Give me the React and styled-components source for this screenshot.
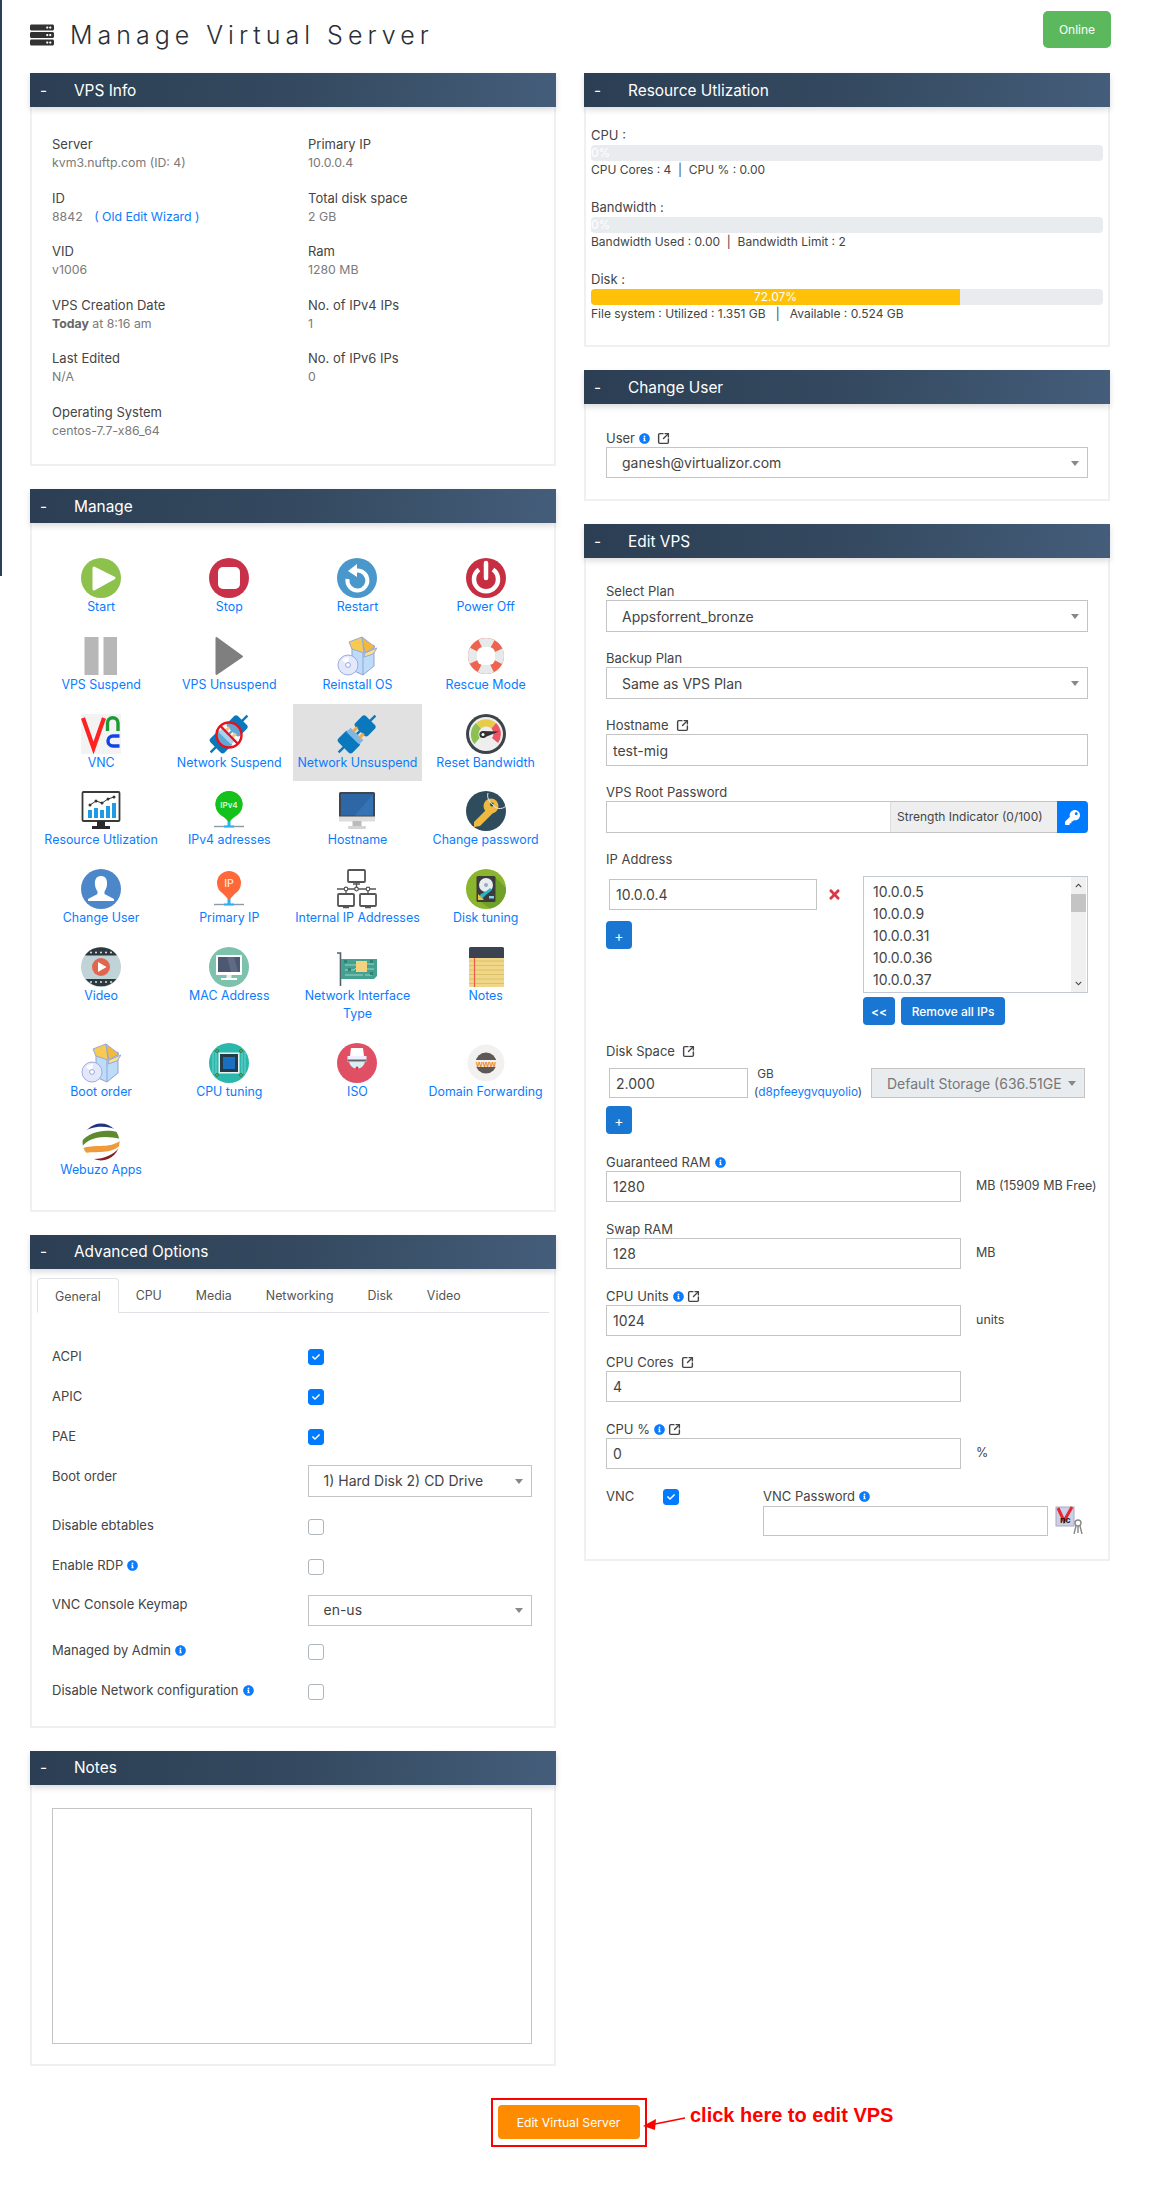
import React from 'react';
import styled, { createGlobalStyle } from 'styled-components';
import { FaServer, FaInfoCircle, FaKey, FaTimes, FaCheck, FaChevronUp, FaChevronDown } from 'react-icons/fa';
import { SquareArrowOutUpRight } from 'lucide-react';

const GlobalStyle = createGlobalStyle`
  * { box-sizing: border-box; }
  html, body { margin: 0; padding: 0; background: #fff; }
  body {
    font-family: Inter, "Open Sans", sans-serif;
    font-size: 13px;
    color: #444;
  }
`;

const Page = styled.div`
  position: relative;
  width: 1151px;
  height: 2199px;
  padding: 0 40px 0 30px;
  overflow: hidden;

  &::before {
    content: '';
    position: absolute;
    left: 0;
    top: 0;
    width: 2px;
    height: 576px;
    background: #2c3e5a;
  }
`;

const TopBar = styled.div`
  display: flex;
  align-items: flex-start;
  justify-content: space-between;
  height: 73px;
  padding-top: 11px;
`;

const Title = styled.h1`
  display: flex;
  align-items: center;
  gap: 16px;
  margin: 6px 0 0;
  font-size: 25px;
  font-weight: 300;
  letter-spacing: 5px;
  line-height: 36px;
  color: #2a2f36;
`;

const Online = styled.div`
  width: 68px;
  height: 37px;
  display: flex;
  align-items: center;
  justify-content: center;
  border-radius: 5px;
  background: #5cb85c;
  color: #fff;
  font-size: 12px;
`;

const Columns = styled.div`
  display: grid;
  grid-template-columns: 525.5px 526px;
  column-gap: 28.5px;
  align-items: start;
`;

const Panel = styled.section`
  margin-bottom: ${p => p.$gap ?? 23}px;
`;

const PanelHead = styled.div`
  display: flex;
  align-items: center;
  height: ${p => p.$h || 34}px;
  background: linear-gradient(95deg, #2b3e54 0%, #34495f 50%, #445d7a 100%);
  box-shadow: 0 3px 6px rgba(0, 0, 0, 0.14);
  color: #fff;
  font-size: 15.4px;
  font-weight: 400;
  position: relative;

  span:first-child {
    width: 44px;
    padding-left: 10px;
  }
`;

const PanelBody = styled.div`
  border: 2px solid #f0f0f0;
  border-top: 0;
  padding: ${p => p.$pad};
`;

const InfoGrid = styled.div`
  display: grid;
  grid-template-columns: 256px 1fr;
  grid-auto-rows: 53.5px;
`;

const InfoLabel = styled.div`
  line-height: 19px;
  color: #444;
  font-size: 13px;
`;

const InfoValue = styled.div`
  line-height: 18px;
  color: #7a7a7a;
  font-size: 12.3px;

  a { color: #0a7bff; text-decoration: none; margin-left: 8px; }
  b { font-weight: 700; color: #666; }
`;

const ManageGrid = styled.div`
  display: grid;
  grid-template-columns: repeat(4, 128.2px);
`;

const ManageCell = styled.a`
  display: block;
  padding: 10px 0 9.5px;
  text-align: center;
  color: #0a7bff;
  font-size: 12.4px;
  line-height: 18.3px;
  white-space: pre-line;
  background: ${p => (p.$active ? '#e1e1e1' : 'transparent')};

  svg { display: block; margin: 0 auto; }
`;

const TabBar = styled.div`
  display: flex;
  height: 35px;
  border-bottom: 1px solid #dee2e6;
  font-size: 12.4px;
  color: #555;
`;

const Tab = styled.div`
  padding: 0 17px;
  line-height: 35px;
  height: 35px;
  ${p => p.$active && `
    background: #fff;
    border: 1px solid #dee2e6;
    border-bottom-color: #fff;
    border-radius: 4px 4px 0 0;
  `}
`;

const OptionList = styled.div`
  margin: 33px 0 0 15px;
`;

const OptionRow = styled.div`
  display: grid;
  grid-template-columns: 255.5px 224px;
  height: ${p => p.$h || 40}px;
  line-height: 20px;
`;

const Control = styled.div`
  margin-top: ${p => p.$top || 0}px;
`;

const Check = styled.span`
  display: flex;
  align-items: center;
  justify-content: center;
  width: 16px;
  height: 16px;
  border-radius: 3px;
  background: ${p => (p.$on ? '#007bff' : '#fff')};
  border: 1px solid ${p => (p.$on ? '#007bff' : '#adb5bd')};
  color: #fff;
`;

const Info = styled(FaInfoCircle)`
  color: #0a7bff;
  font-size: 11px;
  vertical-align: -1px;
  margin-left: ${p => p.$ml ?? 4}px;
`;

const Ext = styled(SquareArrowOutUpRight).attrs({ size: 13, strokeWidth: 2.6 })`
  color: #444;
  vertical-align: -2px;
  margin-left: ${p => p.$ml ?? 7}px;
`;

const SelectBox = styled.div`
  position: relative;
  display: flex;
  align-items: center;
  height: ${p => p.$h || 32}px;
  width: ${p => (p.$w ? `${p.$w}px` : '100%')};
  padding: 0 30px 0 15px;
  border: 1px solid #c4c4c4;
  background: ${p => (p.$disabled ? '#e9ecef' : '#fff')};
  color: ${p => (p.$disabled ? '#777' : '#444')};
  font-size: 14px;
  white-space: nowrap;
  overflow: hidden;

  &::after {
    content: '';
    position: absolute;
    right: 8px;
    top: 50%;
    margin-top: -2px;
    border-left: 4px solid transparent;
    border-right: 4px solid transparent;
    border-top: 5px solid #888;
  }
`;

const TextBox = styled.input`
  display: block;
  height: ${p => p.$h || 31}px;
  width: ${p => (p.$w ? `${p.$w}px` : '100%')};
  margin: 0;
  padding: 0 6px;
  border: 1px solid #c4c4c4;
  border-radius: 0;
  outline: 0;
  background: #fff;
  color: #444;
  font: 14px Inter, sans-serif;
`;

const BarBlock = styled.div`
  margin-bottom: 19px;
  line-height: 18px;
  font-size: 12px;
`;

const BarTitle = styled.div`
  font-size: 13px;
  margin-bottom: 1px;
`;

const Track = styled.div`
  height: 16px;
  border-radius: 4px;
  background: #e9ecef;
  overflow: hidden;
`;

const Fill = styled.div`
  height: 100%;
  background: ${p => (p.$on ? '#ffc107' : 'transparent')};
  color: #fff;
  font-size: 12px;
  line-height: 16px;
  text-align: ${p => (p.$on ? 'center' : 'left')};
  white-space: nowrap;
`;

const FieldWrap = styled.div`
  margin-bottom: ${p => p.$mb ?? 17}px;
`;

const FieldLabel = styled.div`
  height: 18px;
  line-height: 18px;
  font-size: 13px;
  white-space: nowrap;
`;

const InputGroup = styled.div`
  display: flex;
  height: 32px;
  border: 1px solid #c4c4c4;
  border-right: 0;
  border-radius: 0 4px 4px 0;
`;

const Addon = styled.div`
  width: 167px;
  background: #eee;
  border-left: 1px solid #ddd;
  font-size: 12px;
  line-height: 30px;
  padding-left: 6px;
  white-space: nowrap;
`;

const KeyButton = styled.button`
  width: 31px;
  margin: -1px 0;
  border: 0;
  padding: 0;
  border-radius: 0 4px 4px 0;
  background: #007bff;
  color: #fff;
  font-size: 15px;
  display: flex;
  align-items: center;
  justify-content: center;
`;

const BareInput = styled.div`
  flex: 1;
`;

const IpRow = styled.div`
  display: grid;
  grid-template-columns: 257px 225px;
  margin-top: 8px;
`;

const IpLeft = styled.div`
  padding: 3px 0 0 3px;
`;

const IpEntry = styled.div`
  display: flex;
  align-items: center;
  gap: 10px;
  margin-bottom: 11px;
  color: #dc3545;
  font-size: 15px;
`;

const BlueButton = styled.button`
  height: 28px;
  width: ${p => p.$w}px;
  margin-left: ${p => p.$ml || 0}px;
  border: 0;
  padding: 0;
  border-radius: 4px;
  background: #1976d2;
  color: #fff;
  font: ${p => p.$fw || 400} ${p => p.$fs || 12}px Inter, sans-serif;
`;

const IpList = styled.div`
  display: flex;
  justify-content: space-between;
  height: 117px;
  border: 1px solid #c4c8d4;
  color: #444;
  font-size: 14px;
  line-height: 22px;
  overflow: hidden;
`;

const IpOptions = styled.div`
  padding: 4px 0 0 9px;
`;

const Scroll = styled.div`
  display: flex;
  flex-direction: column;
  align-items: center;
  justify-content: space-between;
  width: 15px;
  margin-right: 1px;
  background: #f0f0f0;
  font-size: 7px;
  color: #444;
  padding: 5px 0;
  position: relative;
`;

const Thumb = styled.div`
  position: absolute;
  top: 17px;
  left: 0;
  width: 15px;
  height: 18px;
  background: #c4c4c4;
`;

const ButtonRow = styled.div`
  display: flex;
  gap: 6px;
  margin-top: 4px;
`;

const DiskRow = styled.div`
  display: flex;
  margin: 8px 0 8px 3px;
  height: 30px;
`;

const DiskUnit = styled.div`
  width: 123px;
  padding-left: 6px;
  font-size: 11.8px;
  line-height: 18px;
  margin-top: -3px;
  white-space: nowrap;

  a { color: #0a7bff; }
`;

const SizedRow = styled.div`
  display: grid;
  grid-template-columns: 370px 1fr;
`;

const SideText = styled.div`
  padding-top: 6px;
  font-size: 12.5px;
  line-height: 18px;
  white-space: nowrap;
`;

const VncRow = styled.div`
  display: grid;
  grid-template-columns: 57px 100px 1fr;
  line-height: 18px;
`;

const VncInputs = styled.div`
  display: flex;
  gap: 7px;
  align-items: flex-start;
  margin-top: 1px;
`;

const NotesArea = styled.textarea`
  display: block;
  width: 480px;
  height: 236px;
  border: 1px solid #c4c4c4;
  border-radius: 0;
  margin: 0;
  resize: none;
`;

const SubmitArea = styled.div`
  position: relative;
  display: flex;
  justify-content: center;
  padding: 9px 4px 0 0;
`;

const RedBox = styled.div`
  display: flex;
  align-items: center;
  justify-content: center;
  width: 156px;
  height: 49px;
  border: 2px solid #f00;
`;

const SubmitButton = styled.button`
  width: 142px;
  height: 34px;
  border: 0;
  padding: 0;
  border-radius: 4px;
  background: #ff8c00;
  color: #fff;
  font: 12.2px Inter, sans-serif;
`;

const Callout = styled.div`
  position: absolute;
  left: 660px;
  top: 15px;
  color: #f00;
  font: 700 20px "Liberation Sans", Arial, sans-serif;
  white-space: nowrap;
`;

const CalloutArrow = styled.svg`
  position: absolute;
  left: 613px;
  top: 27px;
`;

const Plug = () => (
  <g transform="rotate(45 20 20)">
    <path d="M20 -6V46" stroke="#0a78bd" strokeWidth="2.4" />
    <rect x="11" y="1" width="18" height="15" rx="3" fill="#0a78bd" />
    <rect x="10" y="24" width="20" height="15" rx="3" fill="#0a78bd" />
    <rect x="11" y="20" width="18" height="6" fill="#7db9e4" />
    <rect x="14" y="15" width="3" height="6" fill="#f0a848" />
    <rect x="23" y="15" width="3" height="6" fill="#f0a848" />
  </g>
);

const BoxCd = () => (
  <>
    <path d="M15 8 L31 12 L37 9 V30 L26 39 L15 34Z" fill="#bcdcf7" stroke="#8fa3d8" />
    <path d="M26 17V39" stroke="#8fa3d8" />
    <path d="M12 6 L25 1 L27 17 L15 13Z" fill="#f7cb52" stroke="#9aa7d8" />
    <path d="M25 1 L38 11 L28 17Z" fill="#f2b93a" stroke="#9aa7d8" />
    <path d="M28 17 L40 12 L36 18 L27 21Z" fill="#ffe08a" stroke="#9aa7d8" />
    <circle cx="11" cy="29" r="10" fill="#e4e8fb" stroke="#a0abe0" />
    <path d="M5 24 A8 8 0 0 1 12 21 L11 29Z" fill="#fff" />
    <circle cx="11" cy="29" r="2.4" fill="#fff" stroke="#9aa5dc" />
  </>
);

const icons = {
  start: <><circle cx="20" cy="20" r="20" fill="#8cc14c" /><path d="M13 10 L33 20 L13 31Z" fill="#fff" stroke="#fff" strokeWidth="3" strokeLinejoin="round" /></>,
  stop: <><circle cx="20" cy="20" r="20" fill="#c9314a" /><rect x="9" y="9" width="22" height="22" rx="5" fill="#fff" /></>,
  restart: <><circle cx="20" cy="20" r="20" fill="#4a97cc" /><path d="M16 13.5 A10 10 0 1 1 10.5 21" fill="none" stroke="#fff" strokeWidth="4" /><path d="M20 6 L20 19 L11 13Z" fill="#fff" /></>,
  power: <><circle cx="20" cy="20" r="20" fill="#c72e42" /><path d="M13 11.5 A12 12 0 1 0 27 11.5" fill="none" stroke="#fff" strokeWidth="4.5" /><path d="M20 5V20" stroke="#fff" strokeWidth="4.5" strokeLinecap="round" /></>,
  suspend: <><rect x="3.5" y="1" width="14" height="38" fill="#b7b7b7" /><rect x="22.5" y="1" width="13.5" height="38" fill="#b7b7b7" /></>,
  unsuspend: <path d="M7.5 2 L33 20.5 L7.5 38Z" fill="#7f7f7f" stroke="#7f7f7f" strokeWidth="2" strokeLinejoin="round" />,
  reinstall: <BoxCd />,
  rescue: <><circle cx="20" cy="20" r="13" fill="none" stroke="#ef6351" strokeWidth="10" /><circle cx="20" cy="20" r="13" fill="none" stroke="#e7eaeb" strokeWidth="10" strokeDasharray="12 8.42" strokeDashoffset="6" /><rect x="11" y="11" width="18" height="18" rx="6" fill="#fff" /></>,
  vnc: <>
    <rect width="40" height="40" fill="#f3f3f3" />
    <path d="M2 4 L12.5 34 L23 4" fill="none" stroke="#f22" strokeWidth="4.2" />
    <path d="M26.5 17 V9 A5 5 0 0 1 37 9 V17" fill="none" stroke="#1a9c35" strokeWidth="3.4" />
    <path d="M38.5 22 H32 A5 5 0 0 0 32 32 H38.5" fill="none" stroke="#0f45e8" strokeWidth="3.4" />
  </>,
  netoff: <><Plug /><circle cx="20" cy="21" r="12.5" fill="rgba(255,255,255,.35)" stroke="#e8111c" strokeWidth="2.4" /><path d="M11.5 12 L29 30" stroke="#e8111c" strokeWidth="2.4" /></>,
  neton: <Plug />,
  gauge: <>
    <circle cx="20" cy="20" r="20" fill="#3b4449" />
    <circle cx="20" cy="20" r="17" fill="#eee" />
    <path d="M8.5 30 A15 15 0 0 1 10 9 L15 14.5 A8 8 0 0 0 13.5 24Z" fill="#8cc152" />
    <path d="M10 9 A15 15 0 0 1 30 9 L25.5 14.5 A8 8 0 0 0 15 14.5Z" fill="#e9cb4c" />
    <path d="M30 9 A15 15 0 0 1 32 29 L26 24 A8 8 0 0 0 25.5 14.5Z" fill="#ed5565" />
    <path d="M16 17 L33 17.5 L17 24Z" fill="#333" /><circle cx="17" cy="20.5" r="3.6" fill="#333" /><circle cx="17" cy="20.5" r="1.5" fill="#fff" />
  </>,
  resource: <>
    <rect x="1.5" y="1" width="37" height="29" rx="1" fill="#fff" stroke="#3a3a3a" strokeWidth="1.8" />
    <path d="M16 30h8v5h5v3H11v-3h5z" fill="#2a2a2a" />
    <g fill="#1e9be4"><rect x="7" y="19" width="4" height="8" /><rect x="13" y="17" width="4" height="10" /><rect x="19" y="19" width="4" height="8" /><rect x="25" y="15" width="4" height="12" /><rect x="31" y="12" width="4" height="15" /></g>
    <path d="M9 14 L15 10 L21 12 L27 8 L33 6" fill="none" stroke="#333" strokeWidth="1" />
    <g fill="#333"><circle cx="9" cy="14" r="1.5" /><circle cx="15" cy="10" r="1.5" /><circle cx="21" cy="12" r="1.5" /><circle cx="27" cy="8" r="1.5" /><circle cx="33" cy="6" r="1.5" /></g>
  </>,
  ipv4: <>
    <path d="M5 35.5H35" stroke="#8c9aa8" strokeWidth="1.4" /><path d="M15 35.5H25" stroke="#2ab0ee" strokeWidth="2" />
    <path d="M20 35 V27" stroke="#2ab0ee" strokeWidth="3" />
    <path d="M8.5 20 A13.5 13 0 1 1 31.5 20 L20 31Z" fill="#14c21b" /><circle cx="20" cy="13.5" r="13.5" fill="#14c21b" />
    <text x="20" y="17" textAnchor="middle" fontFamily="Inter, sans-serif" fontSize="8" fontWeight="600" fill="#d9f7da">IPv4</text>
  </>,
  monitor: <>
    <rect x="2" y="1" width="36" height="29" rx="1.5" fill="#3f464d" />
    <rect x="4" y="3" width="32" height="21.5" fill="#2d67a6" />
    <path d="M18 24.5 L36 3 V24.5Z" fill="#3573b5" />
    <rect x="2" y="25.5" width="36" height="5" fill="#dedede" />
    <rect x="15.5" y="30" width="9" height="5" fill="#bbb" /><rect x="11" y="35" width="18" height="3" rx="1" fill="#d4d4d4" />
  </>,
  key: <>
    <circle cx="20" cy="20" r="20" fill="#2f4c5d" />
    <path d="M8 31 L22 17 L27 22 L14 35 L8 36Z" fill="#eeb940" />
    <circle cx="25" cy="15" r="7.5" fill="#eeb940" /><circle cx="26" cy="13.5" r="2" fill="#2f4c5d" />
    <path d="M22 2 C20 8 26 14 28 14 M27 14 C32 20 38 17 40 15" fill="none" stroke="#e8e8e8" strokeWidth="1" />
  </>,
  user: <><circle cx="20" cy="20" r="20" fill="#4c87c9" /><path d="M20 7 C15 7 13.5 11 14 16 C14.4 19 15.5 21 16.5 22.5 V25 L7 30 V32 H33 V30 L23.5 25 V22.5 C24.5 21 25.6 19 26 16 C26.5 11 25 7 20 7Z" fill="#fff" /></>,
  ip: <>
    <path d="M5 35.5H35" stroke="#8c9aa8" strokeWidth="1.4" /><path d="M15 35.5H25" stroke="#2ab0ee" strokeWidth="2" />
    <path d="M20 35 V27" stroke="#2ab0ee" strokeWidth="3" />
    <path d="M9.5 20 L20 31 L30.5 20Z" fill="#ff693a" /><circle cx="20" cy="14" r="12" fill="#ff693a" />
    <text x="20" y="18" textAnchor="middle" fontFamily="Inter, sans-serif" fontSize="10.5" fontWeight="500" fill="#ffe6dc">IP</text>
  </>,
  network: <>
    <g fill="#fff" stroke="#555" strokeWidth="1.8">
      <rect x="11" y="1" width="17" height="12" rx="1" /><rect x="1" y="25" width="16" height="12" rx="1" /><rect x="23" y="25" width="16" height="12" rx="1" />
    </g>
    <g fill="none" stroke="#555" strokeWidth="1.3">
      <path d="M19.5 13V20M0 20H39M9 20V25M31 20V25M6 38.5H12M28 38.5H34M16 15H23" />
    </g>
    <g fill="#fff" stroke="#555" strokeWidth="1.2"><circle cx="9" cy="20" r="1.8" /><circle cx="19.5" cy="20" r="1.8" /><circle cx="31" cy="20" r="1.8" /></g>
  </>,
  disk: <>
    <circle cx="20" cy="20" r="20" fill="#8ab52c" />
    <path d="M29 8 L40 19 A20 20 0 0 1 24 39.5 L12 31Z" fill="#6fa029" />
    <rect x="10.5" y="7" width="19" height="26" rx="1.5" fill="#3c3c3c" />
    <circle cx="20" cy="16" r="7" fill="#e8eef0" /><circle cx="20" cy="16" r="2" fill="#9ab" />
    <path d="M13 28 C14 24 19 24 24 19 L26 21 C22 25 18 26 16 31Z" fill="#29b6c6" />
    <path d="M12 25 L18 31 H12Z" fill="#f1c232" /><rect x="23" y="27" width="5" height="2.5" fill="#7fd6e6" />
  </>,
  video: <>
    <circle cx="20" cy="20" r="20" fill="#c0d3d6" />
    <path d="M4.5 7.5 A20 20 0 0 1 35.5 7.5 V8.5 H4.5Z M4.5 32 H35.5 A20 20 0 0 1 4.5 32Z" fill="#2c3a3f" />
    <g fill="#e4e4e4"><circle cx="10" cy="5.5" r="1" /><circle cx="15" cy="5.5" r="1" /><circle cx="20" cy="5.5" r="1" /><circle cx="25" cy="5.5" r="1" /><circle cx="30" cy="5.5" r="1" /><circle cx="10" cy="35" r="1" /><circle cx="15" cy="35" r="1" /><circle cx="20" cy="35" r="1" /><circle cx="25" cy="35" r="1" /><circle cx="30" cy="35" r="1" /></g>
    <circle cx="20" cy="20" r="9" fill="#e2654f" /><path d="M17 15 L25.5 20 L17 25Z" fill="#fff" />
  </>,
  mac: <>
    <circle cx="20" cy="20" r="20" fill="#7cc2ac" />
    <rect x="7" y="8" width="26" height="20" rx="1" fill="#fff" />
    <rect x="9" y="10" width="22" height="15" fill="#4d5872" /><path d="M18 10 H25 L29 25 H22Z" fill="#5f6a85" />
    <rect x="17.5" y="28" width="5" height="3" fill="#eee" /><rect x="12" y="31" width="16" height="2" fill="#fff" />
  </>,
  nic: <>
    <path d="M0 6H3.5V39" fill="none" stroke="#53616c" strokeWidth="1.6" />
    <path d="M4 12 H40 V29 L37 32 H4Z" fill="#42a18f" />
    <rect x="19" y="14" width="11" height="11" fill="#f5d27d" />
    <g stroke="#bfe0d8" strokeWidth=".8" fill="none"><path d="M8 18H19M8 23H17L19 21M30 17H37M30 22H37M8 28H26M28 28H35" /></g>
    <g fill="#2d8475"><rect x="7" y="13" width="3" height="3" /><rect x="11" y="21" width="3" height="3" /><rect x="33" y="25" width="3" height="3" /><rect x="33" y="13" width="3" height="3" /></g>
  </>,
  notes: <>
    <rect x="3" y="8" width="35" height="32" rx="1" fill="#efd787" />
    <g stroke="#d8bd68" strokeWidth=".9"><path d="M3 14H38M3 18.5H38M3 23H38M3 27.5H38M3 32H38M3 36.5H38" /></g>
    <path d="M8.5 10V40" stroke="#ed5a4a" strokeWidth="1.2" />
    <path d="M4.5 0H36.5A1.5 1.5 0 0 1 38 1.5V11H3V1.5A1.5 1.5 0 0 1 4.5 0Z" fill="#3c4350" />
  </>,
  cpu: <>
    <circle cx="20" cy="20" r="20" fill="#2cb7ad" />
    <g stroke="#8fdcd6" strokeWidth=".7"><path d="M4 9V31M7 6V34M33 6V34M36 9V31" /></g>
    <rect x="9.5" y="9.5" width="21" height="21" fill="#e6f5f4" />
    <rect x="11" y="11" width="18" height="18" fill="#263a48" /><rect x="14" y="14" width="12" height="12" fill="#1a6fc0" />
    <g fill="#c4b92e" stroke="#175"><circle cx="8" cy="8" r="1.4" /><circle cx="32" cy="8" r="1.4" /><circle cx="8" cy="32" r="1.4" /><circle cx="32" cy="32" r="1.4" /></g>
  </>,
  iso: <>
    <circle cx="20" cy="20" r="20" fill="#e05064" />
    <path d="M14 5 H26 L27 13 H13Z" fill="#fff" />
    <rect x="10.5" y="13" width="19" height="6" fill="#eef" /><rect x="10.5" y="16.5" width="19" height="2" fill="#666" />
    <path d="M12 19 H28 A8.5 10 0 0 1 12 19Z" fill="#d6f0f6" /><circle cx="20" cy="25" r="1.4" fill="#e0304a" />
  </>,
  domain: <>
    <circle cx="20" cy="20" r="18.5" fill="#f3f1f0" />
    <circle cx="20" cy="20" r="10.5" fill="#5d5a55" />
    <path d="M9 17 H31 V24 H9Z" fill="#f3f1f0" />
    <text x="20" y="24" textAnchor="middle" fontFamily="Liberation Sans, sans-serif" fontSize="8.5" fontWeight="700" fill="#f08a1c">www</text>
  </>,
  webuzo: <>
    <clipPath id="wz"><circle cx="20" cy="21" r="18.5" /></clipPath>
    <g clipPath="url(#wz)">
      <rect width="40" height="42" fill="#fff" />
      <path d="M0 13 C8 5 24 3 40 10 V0 H0Z" fill="#22357c" />
      <path d="M0 27 C8 15 24 14 40 18 V12 C26 7 8 10 0 21Z" fill="#5d8b2e" />
      <path d="M0 33 C12 29 28 35 40 24 V19 C28 29 12 22 0 28Z" fill="#ef9b3c" />
      <path d="M4 37 C18 40 30 36 38 27 V42 H4Z" fill="#8a1f22" />
    </g>
  </>,
};

const Icon = ({ name }) => (
  <svg width="40" height="40" viewBox="0 0 40 40" overflow="hidden">{icons[name]}</svg>
);

const manageItems = [
  ['start', 'Start'], ['stop', 'Stop'], ['restart', 'Restart'], ['power', 'Power Off'],
  ['suspend', 'VPS Suspend'], ['unsuspend', 'VPS Unsuspend'], ['reinstall', 'Reinstall OS'], ['rescue', 'Rescue Mode'],
  ['vnc', 'VNC'], ['netoff', 'Network Suspend'], ['neton', 'Network Unsuspend', true], ['gauge', 'Reset Bandwidth'],
  ['resource', 'Resource Utlization'], ['ipv4', 'IPv4 adresses'], ['monitor', 'Hostname'], ['key', 'Change password'],
  ['user', 'Change User'], ['ip', 'Primary IP'], ['network', 'Internal IP Addresses'], ['disk', 'Disk tuning'],
  ['video', 'Video'], ['mac', 'MAC Address'], ['nic', 'Network Interface\nType'], ['notes', 'Notes'],
  ['reinstall', 'Boot order'], ['cpu', 'CPU tuning'], ['iso', 'ISO'], ['domain', 'Domain Forwarding'],
  ['webuzo', 'Webuzo Apps'],
];

const infoItems = [
  ['Server', 'kvm3.nuftp.com (ID: 4)'],
  ['Primary IP', '10.0.0.4'],
  ['ID', <>8842 <a>( Old Edit Wizard )</a></>],
  ['Total disk space', '2 GB'],
  ['VID', 'v1006'],
  ['Ram', '1280 MB'],
  ['VPS Creation Date', <><b>Today</b> at 8:16 am</>],
  ['No. of IPv4 IPs', '1'],
  ['Last Edited', 'N/A'],
  ['No. of IPv6 IPs', '0'],
  ['Operating System', 'centos-7.7-x86_64'],
];

const tabs = ['General', 'CPU', 'Media', 'Networking', 'Disk', 'Video'];

const Head = ({ title }) => (
  <PanelHead>
    <span>-</span>
    <span>{title}</span>
  </PanelHead>
);

const Box = ({ on, top }) => (
  <Control $top={top}>
    <Check $on={on}>{on && <FaCheck size={8} />}</Check>
  </Control>
);

const Field = ({ label, mb, children }) => (
  <FieldWrap $mb={mb}>
    <FieldLabel>{label}</FieldLabel>
    {children}
  </FieldWrap>
);

const App = () => {
  return (
    <Page>
      <GlobalStyle />
      <TopBar>
        <Title><FaServer size={24} color="#333" />Manage Virtual Server</Title>
        <Online>Online</Online>
      </TopBar>

      <Columns>
        <div>
          <Panel>
            <Head title="VPS Info" />
            <PanelBody $pad="28px 20px 8px 20px">
              <InfoGrid>
                {infoItems.map(([label, value]) => (
                  <div key={label}>
                    <InfoLabel>{label}</InfoLabel>
                    <InfoValue>{value}</InfoValue>
                  </div>
                ))}
              </InfoGrid>
            </PanelBody>
          </Panel>

          <Panel>
            <Head title="Manage" />
            <PanelBody $pad="25px 0 21px 5px">
              <ManageGrid>
                {manageItems.map(([icon, label, active]) => (
                  <ManageCell key={label} $active={active}>
                    <Icon name={icon} />
                    {label}
                  </ManageCell>
                ))}
              </ManageGrid>
            </PanelBody>
          </Panel>

          <Panel $gap={23}>
            <Head title="Advanced Options" />
            <PanelBody $pad="9px 5px 6px 5px">
              <TabBar>
                {tabs.map((t, i) => <Tab key={t} $active={i === 0}>{t}</Tab>)}
              </TabBar>
              <OptionList>
                <OptionRow><span>ACPI</span><Box on top={3} /></OptionRow>
                <OptionRow><span>APIC</span><Box on top={3} /></OptionRow>
                <OptionRow><span>PAE</span><Box on top={3} /></OptionRow>
                <OptionRow $h={49}><span>Boot order</span><Control $top={-1}><SelectBox>1) Hard Disk 2) CD Drive</SelectBox></Control></OptionRow>
                <OptionRow><span>Disable ebtables</span><Box top={4} /></OptionRow>
                <OptionRow $h={39}><span>Enable RDP<Info /></span><Box top={4} /></OptionRow>
                <OptionRow $h={46}><span>VNC Console Keymap</span><Control $top={1}><SelectBox $h={31}>en-us</SelectBox></Control></OptionRow>
                <OptionRow><span>Managed by Admin<Info /></span><Box top={4} /></OptionRow>
                <OptionRow><span>Disable Network configuration<Info /></span><Box top={4} /></OptionRow>
              </OptionList>
            </PanelBody>
          </Panel>

          <Panel>
            <Head title="Notes" />
            <PanelBody $pad="23px 20px 20px 20px">
              <NotesArea />
            </PanelBody>
          </Panel>
        </div>

        <div>
          <Panel>
            <Head title="Resource Utlization" />
            <PanelBody $pad="19px 5px 3px 5px">
              <BarBlock>
                <BarTitle>CPU :</BarTitle>
                <Track><Fill>0%</Fill></Track>
                CPU Cores : 4 &nbsp;|&nbsp; CPU % : 0.00
              </BarBlock>
              <BarBlock>
                <BarTitle>Bandwidth :</BarTitle>
                <Track><Fill>0%</Fill></Track>
                Bandwidth Used : 0.00 &nbsp;|&nbsp; Bandwidth Limit : 2
              </BarBlock>
              <BarBlock>
                <BarTitle>Disk :</BarTitle>
                <Track><Fill $on style={{ width: '72.07%' }}>72.07%</Fill></Track>
                File system : Utilized : 1.351 GB &nbsp; | &nbsp; Available : 0.524 GB
              </BarBlock>
            </PanelBody>
          </Panel>

          <Panel>
            <Head title="Change User" />
            <PanelBody $pad="25px 20px 21px 20px">
              <Field label={<>User<Info /><Ext /></>} mb={0}>
                <SelectBox $h={31}>ganesh@virtualizor.com</SelectBox>
              </Field>
            </PanelBody>
          </Panel>

          <Panel>
            <Head title="Edit VPS" />
            <PanelBody $pad="24px 20px 23px 20px">
              <Field label="Select Plan"><SelectBox>Appsforrent_bronze</SelectBox></Field>
              <Field label="Backup Plan"><SelectBox>Same as VPS Plan</SelectBox></Field>
              <Field label={<>Hostname<Ext /></>}><TextBox $h={32} readOnly value="test-mig" /></Field>
              <Field label="VPS Root Password">
                <InputGroup>
                  <BareInput />
                  <Addon>Strength Indicator (0/100)</Addon>
                  <KeyButton><FaKey /></KeyButton>
                </InputGroup>
              </Field>
              <Field label="IP Address">
                <IpRow>
                  <IpLeft>
                    <IpEntry>
                      <TextBox $w={208} readOnly value="10.0.0.4" />
                      <FaTimes />
                    </IpEntry>
                    <BlueButton $w={26} $ml={-3} $fs={14}>+</BlueButton>
                  </IpLeft>
                  <div>
                    <IpList>
                      <IpOptions>
                        <div>10.0.0.5</div>
                        <div>10.0.0.9</div>
                        <div>10.0.0.31</div>
                        <div>10.0.0.36</div>
                        <div>10.0.0.37</div>
                      </IpOptions>
                      <Scroll><FaChevronUp /><Thumb /><FaChevronDown /></Scroll>
                    </IpList>
                    <ButtonRow>
                      <BlueButton $w={32} $fw={600}>&lt;&lt;</BlueButton>
                      <BlueButton $w={104} $fw={500}>Remove all IPs</BlueButton>
                    </ButtonRow>
                  </div>
                </IpRow>
              </Field>
              <Field label={<>Disk Space<Ext /></>} mb={19}>
                <DiskRow>
                  <TextBox $w={139} $h={30} readOnly value="2.000" />
                  <DiskUnit>&nbsp;GB<br />(<a>d8pfeeygvquyolio</a>)</DiskUnit>
                  <SelectBox $w={214} $h={30} $disabled>Default Storage (636.51GE</SelectBox>
                </DiskRow>
                <BlueButton $w={26} $fs={14}>+</BlueButton>
              </Field>
              <Field label={<>Guaranteed RAM<Info /></>} mb={17.8}>
                <SizedRow>
                  <TextBox $w={355} readOnly value="1280" />
                  <SideText>MB (15909 MB Free)</SideText>
                </SizedRow>
              </Field>
              <Field label="Swap RAM" mb={17.8}>
                <SizedRow>
                  <TextBox $w={355} readOnly value="128" />
                  <SideText>MB</SideText>
                </SizedRow>
              </Field>
              <Field label={<>CPU Units<Info /><Ext $ml={3} /></>} mb={17.8}>
                <SizedRow>
                  <TextBox $w={355} readOnly value="1024" />
                  <SideText>units</SideText>
                </SizedRow>
              </Field>
              <Field label={<>CPU Cores<Ext /></>} mb={17.8}>
                <SizedRow>
                  <TextBox $w={355} readOnly value="4" />
                </SizedRow>
              </Field>
              <Field label={<>CPU %<Info /><Ext $ml={3} /></>} mb={17.8}>
                <SizedRow>
                  <TextBox $w={355} readOnly value="0" />
                  <SideText>%</SideText>
                </SizedRow>
              </Field>
              <VncRow>
                <span>VNC</span>
                <Box on top={2} />
                <div>
                  VNC Password<Info />
                  <VncInputs>
                    <TextBox $w={285} $h={30} readOnly value="" />
                    <svg width="28" height="28" viewBox="0 0 28 28">
                      <rect x="1" y="1" width="18" height="19" fill="#c9d0ee" stroke="#aab" />
                      <path d="M3 2 L9 15 L17 1" fill="none" stroke="#e8262c" strokeWidth="3" />
                      <text x="5" y="17" fontFamily="Liberation Sans, sans-serif" fontSize="9" fontWeight="700" fill="#111">nc</text>
                      <circle cx="23" cy="17" r="3" fill="none" stroke="#888" strokeWidth="1.4" />
                      <path d="M21 20 L19 28 M23 20 L23 27 M25 20 L27 28" stroke="#888" strokeWidth="1.4" />
                    </svg>
                  </VncInputs>
                </div>
              </VncRow>
            </PanelBody>
          </Panel>
        </div>
      </Columns>

      <SubmitArea>
        <RedBox><SubmitButton>Edit Virtual Server</SubmitButton></RedBox>
        <CalloutArrow width="44" height="16" viewBox="0 0 44 16">
          <path d="M42 2 L12 8" stroke="#f00" strokeWidth="1.6" />
          <path d="M0 10 L13 3 L12 14Z" fill="#f00" />
        </CalloutArrow>
        <Callout>click here to edit VPS</Callout>
      </SubmitArea>
    </Page>
  );
};

export default App;
